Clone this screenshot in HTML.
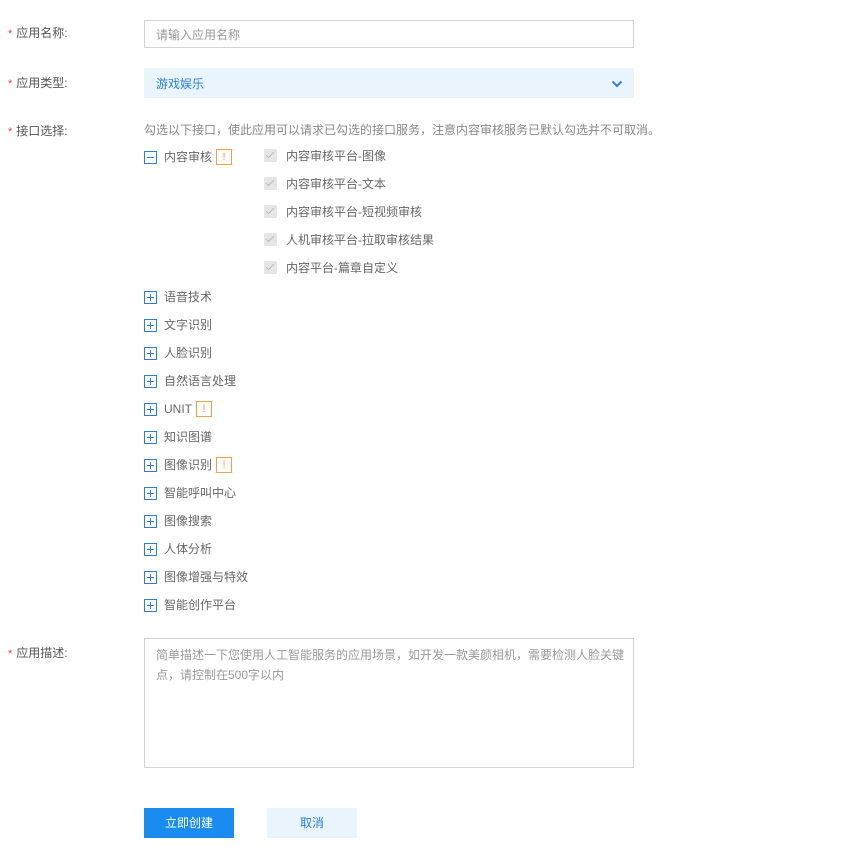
<!DOCTYPE html>
<html><head><meta charset="utf-8"><style>
*{margin:0;padding:0;box-sizing:border-box}
body{width:843px;height:857px;background:#fff;font-family:"Liberation Sans","Noto Sans CJK SC",sans-serif;font-size:12px;color:#666;position:relative;overflow:hidden}
.a{position:absolute;white-space:nowrap}
.lab{left:8px}
.lab b{color:#ea4335;font-weight:normal;margin-right:4px;font-size:11px}
.lab span{color:#555}
.box{position:absolute;border:1px solid #d4d4d4;background:#fff}
.pl{position:absolute;left:144px;width:13px;height:13px;border:1.5px solid #2d7fd6}
.pl:before{content:"";position:absolute;left:2px;right:2px;top:4.5px;height:1.5px;background:#2d7fd6}
.pl.p:after{content:"";position:absolute;top:2px;bottom:2px;left:4.5px;width:1.5px;background:#2d7fd6}
.tx{position:absolute;left:164px;color:#666;height:18px;line-height:18px;display:flex;align-items:center}
.warn{display:inline-block;width:16px;height:16px;border:1px solid #f0a04b;color:#f0a04b;text-align:center;line-height:14px;font-size:11px;margin-left:4px}
.ck{position:absolute;left:264px;width:13px;height:13px;background:#e6e6e6;border-radius:1px}
.ck:after{content:"";position:absolute;left:4px;top:1px;width:3px;height:7px;border:solid #bbb;border-width:0 1.5px 1.5px 0;transform:rotate(45deg)}
.ct{position:absolute;left:286px;color:#666}
</style></head><body>
<div class="a lab" style="top:24px"><b>*</b><span>应用名称:</span></div>
<div class="box" style="left:144px;top:20px;width:490px;height:28px"></div>
<div class="a" style="left:156px;top:26px;color:#999">请输入应用名称</div>

<div class="a lab" style="top:74px"><b>*</b><span>应用类型:</span></div>
<div class="a" style="left:144px;top:68px;width:490px;height:30px;background:#e9f4fd"></div>
<div class="a" style="left:156px;top:75px;color:#2d7fd6">游戏娱乐</div>
<svg class="a" style="left:611px;top:80px" width="12" height="8" viewBox="0 0 12 8"><path d="M1.5 1.5 L6 6 L10.5 1.5" fill="none" stroke="#2d7fd6" stroke-width="2"/></svg>

<div class="a lab" style="top:122px"><b>*</b><span>接口选择:</span></div>
<div class="a" style="left:144px;top:121px;color:#888">勾选以下接口，使此应用可以请求已勾选的接口服务，注意内容审核服务已默认勾选并不可取消。</div>

<div class="pl" style="top:151px"></div>
<div class="tx" style="top:148px">内容审核<span class="warn">!</span></div>
<div class="ck" style="top:149px"></div><div class="ct" style="top:147px">内容审核平台-图像</div>
<div class="ck" style="top:177px"></div><div class="ct" style="top:175px">内容审核平台-文本</div>
<div class="ck" style="top:205px"></div><div class="ct" style="top:203px">内容审核平台-短视频审核</div>
<div class="ck" style="top:233px"></div><div class="ct" style="top:231px">人机审核平台-拉取审核结果</div>
<div class="ck" style="top:261px"></div><div class="ct" style="top:259px">内容平台-篇章自定义</div>

<div class="pl p" style="top:291px"></div><div class="tx" style="top:288px">语音技术</div>
<div class="pl p" style="top:319px"></div><div class="tx" style="top:316px">文字识别</div>
<div class="pl p" style="top:347px"></div><div class="tx" style="top:344px">人脸识别</div>
<div class="pl p" style="top:375px"></div><div class="tx" style="top:372px">自然语言处理</div>
<div class="pl p" style="top:403px"></div><div class="tx" style="top:400px">UNIT<span class="warn">!</span></div>
<div class="pl p" style="top:431px"></div><div class="tx" style="top:428px">知识图谱</div>
<div class="pl p" style="top:459px"></div><div class="tx" style="top:456px">图像识别<span class="warn">!</span></div>
<div class="pl p" style="top:487px"></div><div class="tx" style="top:484px">智能呼叫中心</div>
<div class="pl p" style="top:515px"></div><div class="tx" style="top:512px">图像搜索</div>
<div class="pl p" style="top:543px"></div><div class="tx" style="top:540px">人体分析</div>
<div class="pl p" style="top:571px"></div><div class="tx" style="top:568px">图像增强与特效</div>
<div class="pl p" style="top:599px"></div><div class="tx" style="top:596px">智能创作平台</div>

<div class="a lab" style="top:644px"><b>*</b><span>应用描述:</span></div>
<div class="box" style="left:144px;top:638px;width:490px;height:130px"></div>
<div class="a" style="left:156px;top:645px;width:470px;white-space:normal;line-height:20px;color:#999">简单描述一下您使用人工智能服务的应用场景，如开发一款美颜相机，需要检测人脸关键点，请控制在500字以内</div>

<div class="a" style="left:144px;top:808px;width:90px;height:30px;background:#1a8cf0;color:#fff;text-align:center;line-height:30px">立即创建</div>
<div class="a" style="left:267px;top:808px;width:90px;height:30px;background:#e9f4fd;color:#2d7fd6;text-align:center;line-height:30px">取消</div>
</body></html>
